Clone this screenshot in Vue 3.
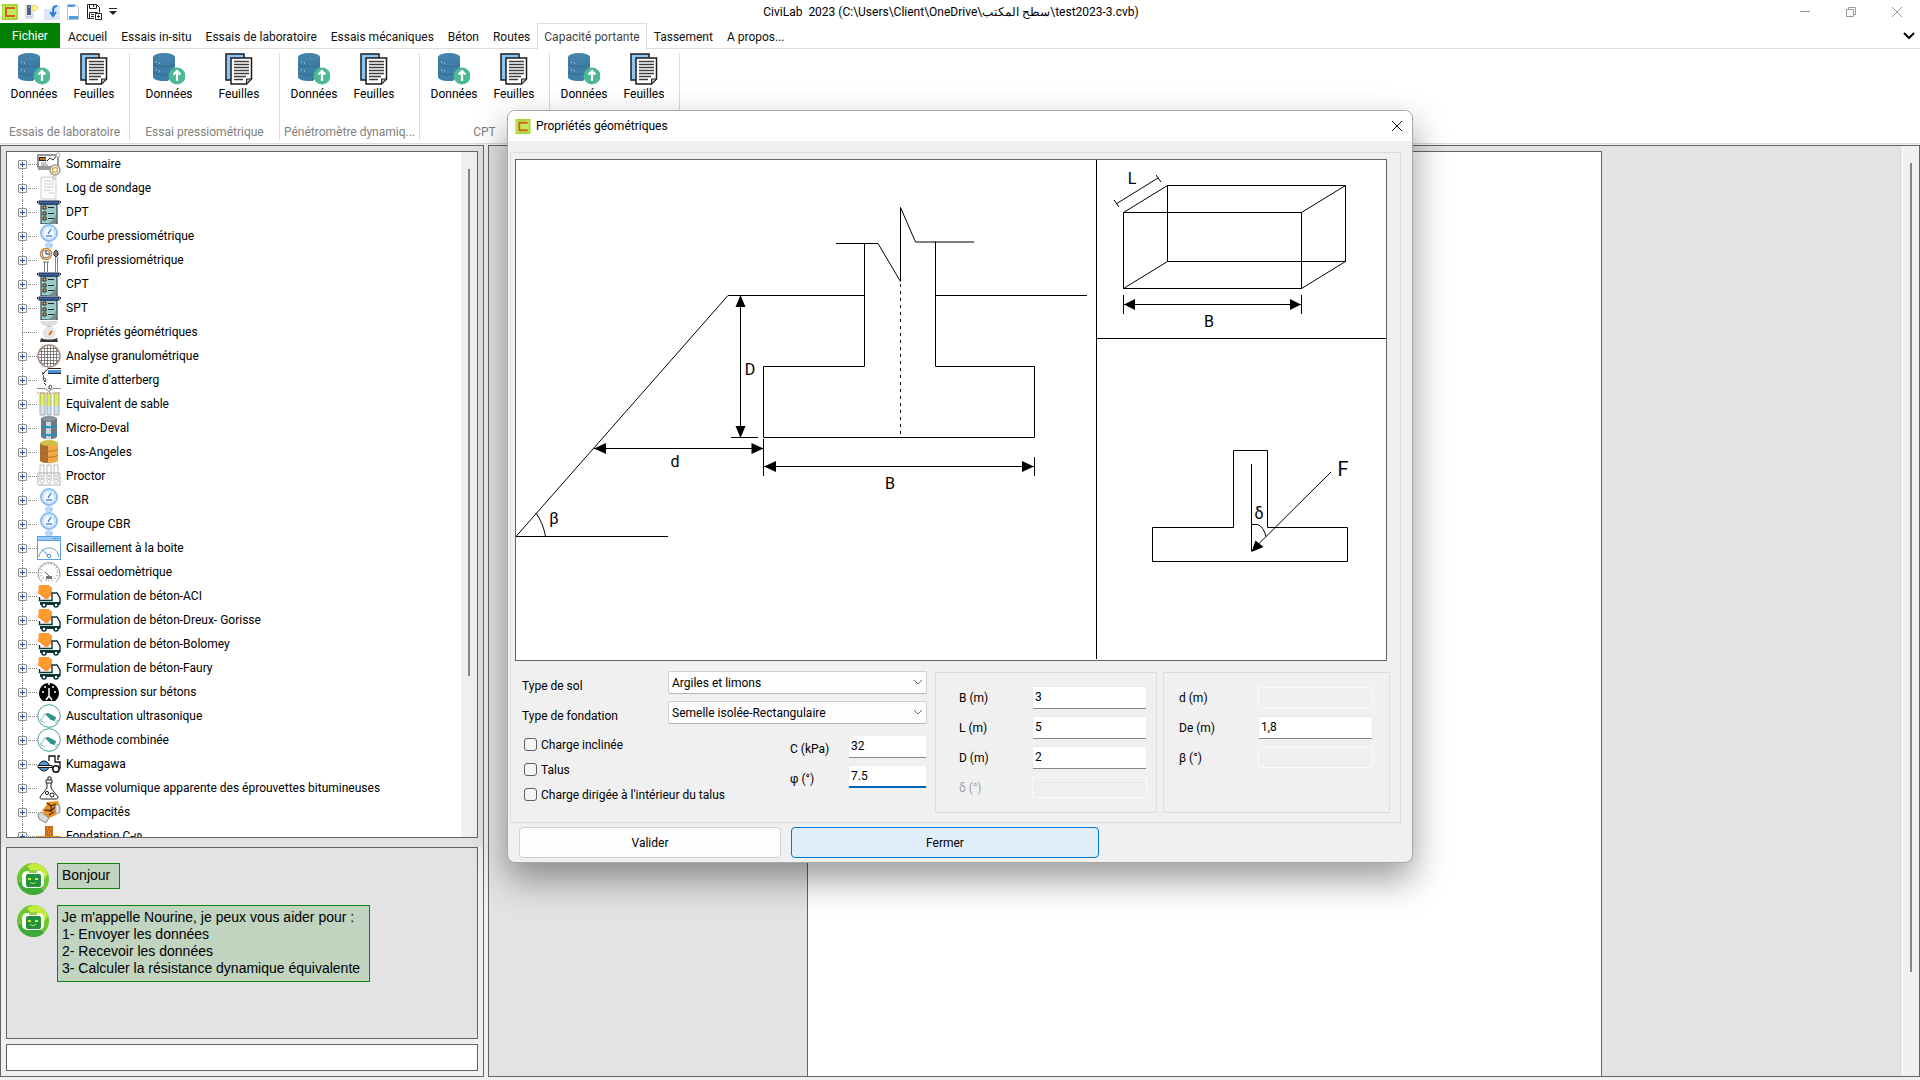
<template>
  <div class="app">
    <svg class="sprite" aria-hidden="true">
      <defs>
        <symbol id="logo" viewBox="0 0 16 16">
          <rect width="16" height="16" fill="#a4d832" />
          <rect x="1" y="2" width="13" height="12" fill="#c0ea5c" />
          <path d="M13 4H4v8h9" fill="none" stroke="#d2601a" stroke-width="2" />
        </symbol>
        <symbol id="database" viewBox="0 0 32 32">
          <path d="M0 4v20c0 2.500 5 4 11 4h4l7-9V4z" fill="#3f7ea6" />
          <path d="M0 11c2 3 18 4 22 0M0 19c2 3 15 4 19 1" fill="none" stroke="#346b91" stroke-width="1" />
          <ellipse cx="11" cy="4" rx="11" ry="4" fill="#4583aa" />
          <path d="M3 9h1M6 10h1M3 17h1M6 18h1" stroke="#cfe6f2" />
          <circle cx="24" cy="23" r="8.500" fill="#4db894" />
          <path d="M24 28v-9M20.500 21.500L24 18l3.500 3.500" fill="none" stroke="#fff" stroke-width="2.200" />
        </symbol>
        <symbol id="sheets" viewBox="0 0 28 32">
          <path d="M1 1h18v26H1z" fill="#8cc6f5" stroke="#1b1b1b" stroke-width="1.500" />
          <path d="M6 5h20.500v21l-5 5H6z" fill="#fff" stroke="#1b1b1b" stroke-width="1.500" />
          <path d="M9 8.500h15M9 11.500h15M9 14.500h15M9 17.500h15M9 20.500h15M9 23.500h12M9 26.500h9" stroke="#3c3c3c" stroke-width="1.500" />
          <path d="M26.500 26h-5v5z" fill="#bbb" stroke="#1b1b1b" />
        </symbol>
        <symbol id="summary" viewBox="0 0 24 24">
          <rect x="1" y="3" width="20" height="12" fill="#fff" stroke="#333" />
          <path d="M1 16h12v2H1z" fill="#999" />
          <rect x="2" y="5" width="7" height="4" fill="#3a1c08" />
          <path d="M3 7h6" stroke="#e58a2c" stroke-width="1.500" />
          <path d="M4 11h5M4 13h7" stroke="#888" />
          <path d="M10 9l3-3 3 2 5-6" fill="none" stroke="#222" />
          <circle cx="21" cy="3" r="2" fill="#fff" stroke="#aaa" />
          <circle cx="18" cy="18" r="5" fill="#fff" stroke="#999" stroke-width="1.500" />
          <circle cx="18" cy="18" r="2.500" fill="#fff" stroke="#e0a93a" stroke-width="1.500" />
        </symbol>
        <symbol id="log" viewBox="0 0 24 24">
          <path d="M4 1h15v22H4z" fill="#fcfcfc" stroke="#ccc" />
          <path d="M7 5h10M7 8h10M7 11h10M7 14h7M12 17h5" stroke="#ccc" />
          <path d="M16 0v3h3" stroke="#bbb" fill="none" />
        </symbol>
        <symbol id="penetro" viewBox="0 0 24 24">
          <rect x="4" y="4" width="16" height="20" fill="#97cdcb" stroke="#222" />
          <path d="M19 14v10H9c6-2 9-5 10-10z" fill="#7d8a8c" />
          <rect x="2" y="1" width="20" height="3" fill="#3c63a5" stroke="#1d2c4b" />
          <path d="M0 1v2M24 1v2" stroke="#222" stroke-width="2" />
          <path d="M6 6h3v3H6zM6 12h3v3H6zM6 17h3v3H6z" fill="#f0a94f" stroke="#222" />
          <path d="M11 7.500h6M11 13.500h6M11 18.500h6" stroke="#222" />
        </symbol>
        <symbol id="gauge" viewBox="0 0 24 24">
          <circle cx="12" cy="9" r="8" fill="#e4f1ff" stroke="#8bbcf3" stroke-width="2" />
          <circle cx="12" cy="9" r="5.500" fill="#fff" stroke="#a3cbf6" stroke-dasharray="2 1" />
          <path d="M14 5l-3 5M9 12h6" stroke="#4a93e6" stroke-width="1.500" fill="none" />
          <path d="M10 18h4M9 20h6v3H9z" stroke="#8bbcf3" fill="#cfe4fb" />
        </symbol>
        <symbol id="profile" viewBox="0 0 24 24">
          <circle cx="9" cy="6" r="5.500" fill="#fff" stroke="#d08b2e" stroke-width="1.500" />
          <circle cx="9" cy="6" r="3.800" fill="none" stroke="#222" stroke-width=".6" />
          <path d="M9 3v3h3" stroke="#222" fill="none" />
          <path d="M6 14h6M7.500 14v10M10.500 14v10" stroke="#777" fill="none" />
          <path d="M17 4l2-2 2 2v3l-2 2-2-2z" fill="#888" stroke="#222" />
          <path d="M18.500 9v15M20.500 9v15" stroke="#888" />
        </symbol>
        <symbol id="scale" viewBox="0 0 24 24">
          <path d="M3 1h18c-1 4-4 5-9 5S4 5 3 1z" fill="#ddd" />
          <path d="M10 6h4v3h-4z" fill="#aaa" />
          <circle cx="12" cy="13" r="6.500" fill="#e6e6e6" />
          <path d="M12 15l3-4" stroke="#e26a1f" stroke-width="2" />
          <path d="M4 18c4 2 12 2 16 0l1 4H3z" fill="#34383e" />
        </symbol>
        <symbol id="sieve" viewBox="0 0 24 24">
          <circle cx="12" cy="12" r="11" fill="#fff" stroke="#a48b80" stroke-width="1.500" />
          <path d="M4.500 5v14M7.500 3v18M10.500 2v20M13.500 2v20M16.500 3v18M19.500 5v14M5 4.500h14M3 7.500h18M2 10.500h20M2 13.500h20M3 16.500h18M5 19.500h14" stroke="#555" stroke-width=".7" />
        </symbol>
        <symbol id="atterberg" viewBox="0 0 24 24">
          <path d="M24 .5H11L6 6M24 5.500H11" stroke="#222" fill="none" />
          <path d="M11 2h13v3H11z" fill="#4a90d9" />
          <path d="M6 4c-2 3 2 3 0 6M6 11c2-2 4 0 2 3zM12 18c4-3 3 4 0 3zM7 15l2 2" stroke="#333" fill="none" />
          <path d="M0 20.500h8l4 3 4-3h8" stroke="#888" fill="none" />
        </symbol>
        <symbol id="tubes" viewBox="0 0 24 24">
          <path d="M3 2h5v12H3zM10 2h4v12h-4zM17 2h5v12h-5z" fill="#dff04a" />
          <path d="M3 14h5v9H3zM10 14h4v9h-4zM17 14h5v9h-5z" fill="#c8e6fb" />
          <path d="M3 1h5v22H3zM10 1h4v22h-4zM17 1h5v22h-5z" fill="none" stroke="#a6a6a6" />
          <path d="M0 1h24" stroke="#c79a5c" stroke-dasharray="2 1" />
        </symbol>
        <symbol id="barrel" viewBox="0 0 24 24">
          <path d="M4 3v18c3 3 13 3 16 0V3z" fill="#6d7a80" />
          <path d="M9 4h5v19H9z" fill="#cfd5d8" />
          <ellipse cx="12" cy="3" rx="8" ry="2.500" fill="#8b969b" stroke="#5d676c" stroke-width=".6" />
          <path d="M4 8c4 3 12 3 16 0v2c-4 3-12 3-16 0zM4 16c4 3 12 3 16 0v2c-4 3-12 3-16 0z" fill="#248fb8" />
        </symbol>
        <symbol id="drum" viewBox="0 0 24 24">
          <path d="M3 3v18c4 3 14 3 18 0V3z" fill="#f0a945" />
          <path d="M3 3v18c2 1 5 2 8 2V4z" fill="#a96c2c" />
          <ellipse cx="12" cy="3" rx="9" ry="3" fill="#cfc14a" />
          <path d="M3 9c4 3 14 3 18 0M3 15c4 3 14 3 18 0" stroke="#b5762a" fill="none" />
        </symbol>
        <symbol id="proctor" viewBox="0 0 24 24">
          <path d="M3 1h4v16c0 3-4 3-4 0zM10 1h4v16c0 3-4 3-4 0zM17 1h4v16c0 3-4 3-4 0z" fill="#fff" stroke="#bbb" />
          <path d="M1 9h22v12H1z" fill="none" stroke="#b9a9bf" />
          <path d="M4 12h2M11 12h2M18 12h2M4 15h2M11 15h2M18 15h2" stroke="#999" />
        </symbol>
        <symbol id="shear" viewBox="0 0 24 24">
          <rect x=".5" y=".5" width="23" height="23" fill="#fff" stroke="#5a9fe8" />
          <path d="M1 1h22v3H1z" fill="#9cc9f8" />
          <path d="M1 4.500h22" stroke="#5a9fe8" />
          <path d="M16 2.500h1M18 2.500h1M20 2.500h1" stroke="#2b6fbd" />
          <path d="M2 21c1-12 19-12 20 0" fill="none" stroke="#5fa3a8" />
          <path d="M5 14l7 6" stroke="#3d8ae0" />
          <circle cx="12" cy="20" r="1.800" fill="#fff" stroke="#3d8ae0" />
        </symbol>
        <symbol id="oedo" viewBox="0 0 24 24">
          <path d="M5 22a11 11 0 1 1 14 0" fill="#fff" stroke="#999" />
          <circle cx="12" cy="12" r="8.500" fill="none" stroke="#aaa" stroke-width="2" stroke-dasharray="1 2.200" />
          <path d="M9 16h6v3H9z" fill="#777" />
          <path d="M12 16L8 12" stroke="#555" />
        </symbol>
        <symbol id="mixer" viewBox="0 0 24 24">
          <path d="M2 1h10l3 3v6l-4 5H8L1 9z" fill="#ff9a33" />
          <path d="M2.500 13v3.500H15V9h5l3 5v6" fill="none" stroke="#0b3538" stroke-width="1.400" />
          <path d="M3 18h20v3H3z" fill="#0b3538" />
          <circle cx="7" cy="21" r="2" fill="#fff" stroke="#0b3538" stroke-width="1.600" />
          <circle cx="19" cy="21" r="2" fill="#fff" stroke="#0b3538" stroke-width="1.600" />
        </symbol>
        <symbol id="dial" viewBox="0 0 24 24">
          <path d="M6 21a10 10 0 1 1 12 0z" fill="#000" />
          <path d="M12 8v9M12 16l-3 4M12 16l3 4" stroke="#fff" stroke-width="1.500" />
          <path d="M5 12h2M17 12h2M7 7h2M15 7h2M11 4h2" stroke="#fff" stroke-width="1.500" />
        </symbol>
        <symbol id="ultrasound" viewBox="0 0 24 24">
          <circle cx="12" cy="12" r="11.300" fill="#fff" stroke="#3f9f99" />
          <path d="M8 10l3-1 8 4-1 4-4-1z" fill="#2f8f8c" />
          <path d="M8 10c-2 0-1 5-5 6l5 3" fill="none" stroke="#8ab5b3" />
          <path d="M19 17l3-1M18 19l2-1" stroke="#8ab5b3" />
        </symbol>
        <symbol id="roller" viewBox="0 0 24 24">
          <circle cx="7" cy="14" r="5" fill="#4a9be0" stroke="#111" />
          <path d="M1 13.500h14v2H1z" fill="#fff" stroke="#111" />
          <path d="M12 9V4h6v6h5v6h-8M21 8V4h2" fill="none" stroke="#111" stroke-width="1.300" />
          <circle cx="19" cy="17" r="3.200" fill="#fff" stroke="#111" stroke-width="1.500" />
        </symbol>
        <symbol id="flask" viewBox="0 0 24 24">
          <path d="M9 4h6v3H9zM10 7v5L3 21c0 2 1 2 2 2h14c1 0 2 0 2-2l-7-9V7" fill="#fff" stroke="#222" />
          <path d="M11 4V1h3v3" fill="none" stroke="#222" />
          <circle cx="10" cy="17" r="1.600" fill="none" stroke="#222" />
          <circle cx="15" cy="19" r="2" fill="none" stroke="#222" />
        </symbol>
        <symbol id="compactor" viewBox="0 0 24 24">
          <path d="M5 10l4-4 1-4 11-1 2 5-4 9-9 4z" fill="#ea9122" />
          <path d="M10 3l4 3 5-2M8 10l6 1 6-6M14 6v6M12 15l5-3" stroke="#4a2a0a" fill="none" stroke-width="1.300" />
          <path d="M1 14l3-2 8 6-3 5-7-4z" fill="#d8d8d8" stroke="#888" />
          <ellipse cx="20.500" cy="9" rx="2.500" ry="4.500" fill="#ddd" stroke="#888" />
        </symbol>
        <symbol id="footing" viewBox="0 0 24 24">
          <path d="M8 2h8v10h8v8H0v-8h8z" fill="#ee8a22" />
          <path d="M8 2h8v10H8z" fill="#c96c12" />
          <path d="M10 4h1M13 5h1M11 8h1M13 10h1" stroke="#f7c07a" />
        </symbol>
        <symbol id="robot" viewBox="0 0 32 32">
          <circle cx="16" cy="16" r="16" fill="#6cc531" />
          <path d="M16 0a16 16 0 0 1 15 11L24 21 10 3z" fill="#c3ec3c" />
          <path d="M1 20a16 16 0 0 0 15 12 16 16 0 0 0 11-4L14 16z" fill="#3dab38" />
          <rect x="5" y="8" width="22" height="17" rx="5" fill="#fcfff0" />
          <rect x="12" y="7" width="8" height="3" rx="1" fill="#93cf45" />
          <rect x="9" y="11" width="15" height="13" rx="2" fill="#239040" />
          <path d="M11 15h3v2h-3zM18 15h3v2h-3z" fill="#c1ef4a" />
          <path d="M13 19c1 2 5 2 6 0" stroke="#c1ef4a" fill="none" />
        </symbol>
      </defs>
    </svg>

    <header class="titlebar">
      <div class="quick">
        <svg width="16" height="16"><use href="#logo" /></svg>
        <button aria-label="Nouveau">
          <svg width="16" height="16" viewBox="0 0 16 16">
            <path d="M2 1h9v14H2z" fill="#dfe5ee" />
            <path d="M4 1h4v10H4z" fill="#51617b" />
            <path d="M5 3h2M3 13h6" stroke="#a9c6ea" />
            <circle cx="12" cy="4" r="2.500" fill="#fff9a8" stroke="#e8df38" />
          </svg>
        </button>
        <button aria-label="Ouvrir">
          <svg width="16" height="16" viewBox="0 0 16 16">
            <path d="M0 5h6l2-4h8v15H0z" fill="#dae6fa" />
            <path d="M13 2c-4 0-4 3-4 9M6 8l3 4 3-4" fill="none" stroke="#2a7bd8" stroke-width="2" />
          </svg>
        </button>
        <button aria-label="Modèle">
          <svg width="16" height="16" viewBox="0 0 16 16">
            <path d="M2.500.5h8l3 3v12h-11z" fill="#fff" stroke="#b5bcc8" />
            <path d="M3 1h7v2H3zM4 12h9v3H4z" fill="#4aa0e6" />
          </svg>
        </button>
        <button aria-label="Enregistrer">
          <svg width="16" height="16" viewBox="0 0 16 16" fill="none" stroke="#222">
            <path d="M8 14.500H1.500V.5h9l3 3v5M3.500.5v4h7v-4M7.500 1v2M3.500 14V8.500h8M5 10.500h3M5 12.500h3" />
            <path d="M9.500 9.500h6v6h-6zM12.500 11v3M11 12.500h3" />
          </svg>
        </button>
        <button class="more" aria-label="Personnaliser">
          <svg width="8" height="8" viewBox="0 0 8 8"><path d="M0 .5h8" stroke="#222" /><path d="M0 3h8L4 7z" fill="#222" /></svg>
        </button>
      </div>
      <h1 class="title">CiviLab&nbsp; 2023 (C:\Users\Client\OneDrive\<bdi>سطح المكتب</bdi>\test2023-3.cvb)</h1>
      <div class="window-buttons">
        <button aria-label="Réduire"><svg width="10" height="10"><path d="M0 4.500h10" stroke="#999" /></svg></button>
        <button aria-label="Restaurer">
          <svg width="10" height="10" fill="none" stroke="#999"><path d="M.5 2.500h7v7h-7zM2.500 2.500v-2h7v7h-2" /></svg>
        </button>
        <button aria-label="Quitter"><svg width="10" height="10"><path d="M0 0l10 10M10 0L0 10" stroke="#999" /></svg></button>
      </div>
    </header>

    <nav class="tabs">
      <a v-for="tab in tabs" :key="tab" href="#" class="tab" :class="{ file: tab === 'Fichier', active: tab === activeTab }">{{ tab }}</a>
      <button class="collapse" aria-label="Réduire le ruban">
        <svg width="12" height="8" viewBox="0 0 12 8"><path d="M1 1l5 5 5-5" fill="none" stroke="#000" stroke-width="2" /></svg>
      </button>
    </nav>

    <section class="ribbon">
      <div v-for="(group, i) in groups" :key="i" class="ribbon-group" :class="group.size">
        <div class="ribbon-buttons">
          <button><svg width="32" height="32"><use href="#database" /></svg>Données</button>
          <button><svg width="28" height="32"><use href="#sheets" /></svg>Feuilles</button>
        </div>
        <div class="ribbon-label">{{ group.label }}</div>
      </div>
    </section>

    <main class="workspace">
      <aside class="side">
        <div class="tree-zone">
          <div class="tree">
            <ul>
              <li v-for="item in tree" :key="item.label">
                <span class="branch"><button v-if="!item.leaf" class="expand" aria-label="Développer"></button></span>
                <svg width="24" height="24"><use :href="'#' + item.icon" /></svg>
                <span class="node">{{ item.label }}</span>
              </li>
            </ul>
            <div class="scrollbar"><div class="thumb tree-thumb"></div></div>
          </div>
        </div>
        <div class="chat">
          <div v-for="(message, i) in messages" :key="i" class="message">
            <svg width="32" height="32"><use href="#robot" /></svg>
            <p>{{ message }}</p>
          </div>
        </div>
        <input v-model="question" class="chat-input" aria-label="Message" />
      </aside>

      <section class="document">
        <div class="sheet"></div>
        <div class="scrollbar page-scroll"><div class="thumb page-thumb"></div></div>
      </section>
    </main>

    <div class="overlay">
      <div class="dialog" role="dialog" aria-labelledby="dialog-title">
        <div class="dialog-bar">
          <svg width="16" height="15" preserveAspectRatio="none"><use href="#logo" /></svg>
          <h2 id="dialog-title">Propriétés géométriques</h2>
          <button aria-label="Fermer la fenêtre"><svg width="10" height="10"><path d="M0 0l10 10M10 0L0 10" stroke="#111" /></svg></button>
        </div>

        <div class="frame">
          <svg class="sketch" viewBox="0 0 870 500">
            <g class="line">
              <path d="M580.500 0v499M580.500 178.500H870" />
              <!-- slope and footing -->
              <path d="M152 376.500H0L212 135.500h136.500M419.500 135.500H571" />
              <path d="M320 83.500h42l22.500 38v-74l15 34.500H458" />
              <path d="M348.500 83.500v123h-101v71h271v-71h-99v-125" />
              <path d="M384.500 124v153" stroke-dasharray="3 4" />
              <path d="M224.500 135v142M215 277.500h27" />
              <path d="M78 288.500h169.500M247.500 279v37M518.500 297v19M247.500 306.500h271" />
              <path d="M20 353q7 10 9.500 23" />
              <!-- box in perspective -->
              <path d="M607.500 52.500h178v76h-178zM651.500 25.500h178v76h-178z" />
              <path d="M607.500 52.500l44-27M785.500 52.500l44-27M607.500 128.500l44-27M785.500 128.500l44-27" />
              <path d="M600 44l42-26M598 40l5 7M640 15l5 7" />
              <path d="M607.500 135v19M785.500 135v19M607.500 144.500h178" />
              <!-- inclined load -->
              <path d="M717.500 290.500h34v77h80v34h-195v-34h81z" />
              <path d="M735.500 304v87l79.500-79M735.500 364.500h6q6 2 8.500 12" />
            </g>
            <path d="M224.500 135l5 12h-10zM224.500 278l5-12h-10zM78 288.500l12-5.500v11zM247.500 288.500l-12-5.500v11zM248 306.500l12-5.500v11zM518 306.500l-12-5.500v11zM608 144.500l11-5.500v11zM785 144.500l-11-5.500v11zM735.500 392l4-11.500 8 6.500z" />
            <g class="letters">
              <text x="234" y="215">D</text>
              <text x="159" y="307">d</text>
              <text x="374" y="329">B</text>
              <text x="38" y="364">β</text>
              <text x="616" y="24">L</text>
              <text x="693" y="167">B</text>
              <text x="743" y="359">δ</text>
              <text x="827" y="316" class="force">F</text>
            </g>
          </svg>

          <div class="form">
            <div class="soil">
              <div class="choices">
                <label for="sol">Type de sol</label>
                <div class="select">
                  <select id="sol" v-model="sol"><option>Argiles et limons</option></select>
                  <svg width="10" height="6"><path d="M1 0l4 4 4-4" /></svg>
                </div>
                <label for="fondation">Type de fondation</label>
                <div class="select">
                  <select id="fondation" v-model="fondation"><option>Semelle isolée-Rectangulaire</option></select>
                  <svg width="10" height="6"><path d="M1 0l4 4 4-4" /></svg>
                </div>
              </div>
              <div class="details">
                <div class="checks">
                  <label v-for="check in checks" :key="check.label"><input v-model="check.value" type="checkbox" />{{ check.label }}</label>
                </div>
                <div class="params">
                  <label for="cohesion">C (kPa)</label>
                  <input id="cohesion" v-model="cohesion" />
                  <label for="phi">φ (°)</label>
                  <input id="phi" v-model="phi" class="focused" />
                </div>
              </div>
            </div>

            <div v-for="(box, i) in dimensions" :key="i" class="dims" :class="'dims-' + i">
              <div v-for="field in box" :key="field.id" class="field">
                <label :for="field.id" :class="{ off: field.id === 'delta' }">{{ field.label }}</label>
                <input :id="field.id" v-model="field.value" :disabled="field.disabled" />
              </div>
            </div>
          </div>
        </div>

        <div class="actions">
          <button class="validate">Valider</button>
          <button class="close">Fermer</button>
        </div>
      </div>
    </div>
  </div>
</template>

<script setup>
import { ref } from 'vue'

const activeTab = ref('Capacité portante')
const tabs = [
  'Fichier', 'Accueil', 'Essais in-situ', 'Essais de laboratoire', 'Essais mécaniques',
  'Béton', 'Routes', 'Capacité portante', 'Tassement', 'A propos...',
]

const groups = [
  { label: 'Essais de laboratoire', size: '' },
  { label: 'Essai pressiométrique', size: 'wide' },
  { label: 'Pénétromètre dynamiq...', size: 'medium' },
  { label: 'CPT', size: '' },
  { label: '', size: '' },
]

const tree = [
  { label: 'Sommaire', icon: 'summary' },
  { label: 'Log de sondage', icon: 'log' },
  { label: 'DPT', icon: 'penetro' },
  { label: 'Courbe pressiométrique', icon: 'gauge' },
  { label: 'Profil pressiométrique', icon: 'profile' },
  { label: 'CPT', icon: 'penetro' },
  { label: 'SPT', icon: 'penetro' },
  { label: 'Propriétés géométriques', icon: 'scale', leaf: true },
  { label: 'Analyse granulométrique', icon: 'sieve' },
  { label: "Limite d'atterberg", icon: 'atterberg' },
  { label: 'Equivalent de sable', icon: 'tubes' },
  { label: 'Micro-Deval', icon: 'barrel' },
  { label: 'Los-Angeles', icon: 'drum' },
  { label: 'Proctor', icon: 'proctor' },
  { label: 'CBR', icon: 'gauge' },
  { label: 'Groupe CBR', icon: 'gauge' },
  { label: 'Cisaillement à la boite', icon: 'shear' },
  { label: 'Essai oedomètrique', icon: 'oedo' },
  { label: 'Formulation de béton-ACI', icon: 'mixer' },
  { label: 'Formulation de béton-Dreux- Gorisse', icon: 'mixer' },
  { label: 'Formulation de béton-Bolomey', icon: 'mixer' },
  { label: 'Formulation de béton-Faury', icon: 'mixer' },
  { label: 'Compression sur bétons', icon: 'dial' },
  { label: 'Auscultation ultrasonique', icon: 'ultrasound' },
  { label: 'Méthode combinée', icon: 'ultrasound' },
  { label: 'Kumagawa', icon: 'roller' },
  { label: 'Masse volumique apparente des éprouvettes bitumineuses', icon: 'flask' },
  { label: 'Compacités', icon: 'compactor' },
  { label: 'Fondation C-φ', icon: 'footing' },
]

const messages = [
  'Bonjour',
  "Je m'appelle Nourine, je peux vous aider pour :\n1- Envoyer les données\n2- Recevoir les données\n3- Calculer la résistance dynamique équivalente",
]
const question = ref('')

const sol = ref('Argiles et limons')
const fondation = ref('Semelle isolée-Rectangulaire')
const cohesion = ref('32')
const phi = ref('7.5')

const checks = ref([
  { label: 'Charge inclinée', value: false },
  { label: 'Talus', value: false },
  { label: "Charge dirigée à l'intérieur du talus", value: false },
])

const dimensions = ref([
  [
    { id: 'b', label: 'B (m)', value: '3' },
    { id: 'l', label: 'L (m)', value: '5' },
    { id: 'depth', label: 'D (m)', value: '2' },
    { id: 'delta', label: 'δ (°)', value: '', disabled: true },
  ],
  [
    { id: 'distance', label: 'd (m)', value: '', disabled: true },
    { id: 'de', label: 'De (m)', value: '1,8' },
    { id: 'beta', label: 'β (°)', value: '', disabled: true },
  ],
])
</script>

<style>
body {
  margin: 0;
  overflow: hidden;
}
</style>

<style scoped>
.app {
  position: relative;
  display: flex;
  flex-direction: column;
  height: 100vh;
  background: #f0f0f0;
  color: #000;
  font-family: Roboto, "Noto Sans", sans-serif;
  font-size: 12px;
  line-height: 16px;
}

.app * {
  box-sizing: border-box;
}

button,
input,
select {
  font: inherit;
  color: inherit;
}

button {
  padding: 0;
  border: 0;
  background: none;
}

svg {
  display: block;
  flex: none;
}

h1,
h2,
p,
ul {
  margin: 0;
  padding: 0;
  font-size: 12px;
  font-weight: 400;
}

.sprite {
  position: absolute;
  width: 0;
  height: 0;
}

/* title bar */
.titlebar {
  display: grid;
  grid-template-columns: 138px 1fr 156px;
  align-items: center;
  height: 23px;
  background: #fff;
}

.quick {
  display: flex;
  align-items: center;
  gap: 5px;
  padding-left: 2px;
}

.more {
  margin-left: 2px;
}

.title {
  text-align: center;
}

.window-buttons {
  display: flex;
  justify-content: flex-end;
}

.window-buttons button {
  display: grid;
  place-items: center;
  width: 46px;
  height: 23px;
}

/* tabs */
.tabs {
  display: flex;
  height: 26px;
  background: #fff;
  border-bottom: 1px solid #dcdcdc;
}

.tab {
  height: 26px;
  padding: 0 6px;
  border: 1px solid transparent;
  border-bottom: 0;
  color: #111;
  line-height: 26px;
  text-decoration: none;
  white-space: nowrap;
}

.tab.file {
  width: 60px;
  margin-right: 1px;
  padding: 0;
  border: 0;
  height: 25px;
  background: #008000;
  color: #fff;
  text-align: center;
}

.tab.active {
  border-color: #dcdcdc;
  background: #fff;
  color: #444;
}

.collapse {
  margin: 0 5px 0 auto;
}

/* ribbon */
.ribbon {
  display: flex;
  height: 95px;
  padding: 4px 0 3px;
  background: #fff;
  border-bottom: 1px solid #dcdcdc;
}

.ribbon-group {
  display: flex;
  flex-direction: column;
  justify-content: space-between;
  width: 130px;
  padding: 0 4px;
  border-right: 1px solid #dcdcdc;
}

.ribbon-group.wide {
  width: 150px;
}

.ribbon-group.medium {
  width: 140px;
}

.ribbon-buttons {
  display: flex;
}

.ribbon-buttons button {
  display: flex;
  flex-direction: column;
  gap: 1px;
  align-items: center;
  width: 60px;
}

.wide .ribbon-buttons button {
  width: 70px;
}

.ribbon-label {
  color: #808080;
  text-align: center;
  white-space: nowrap;
}

/* workspace */
.workspace {
  display: flex;
  flex: 1;
  gap: 4px;
  min-height: 0;
  padding: 1px 0 3px;
}

.side {
  display: flex;
  flex-direction: column;
  width: 484px;
  border: 1px solid #646464;
}

.tree-zone {
  display: flex;
  flex: 1;
  min-height: 0;
  padding: 5px 5px 9px;
  background: #e3e3e3;
}

.tree {
  display: flex;
  flex: 1;
  overflow: hidden;
  border: 1px solid #646464;
  background: #fff;
}

.tree ul {
  flex: 1;
  list-style: none;
}

.tree li {
  display: flex;
  align-items: center;
  height: 24px;
  padding-left: 11px;
  white-space: nowrap;
}

.branch {
  position: relative;
  width: 19px;
  height: 24px;
}

.branch::before {
  content: "";
  position: absolute;
  top: 0;
  left: 4px;
  height: 24px;
  border-left: 1px dotted #808080;
}

li:first-child .branch::before {
  top: 12px;
  height: 12px;
}

.branch::after {
  content: "";
  position: absolute;
  top: 12px;
  left: 4px;
  width: 15px;
  border-top: 1px dotted #808080;
}

.expand {
  position: absolute;
  z-index: 1;
  top: 8px;
  left: 0;
  width: 9px;
  height: 9px;
  border: 1px solid #919191;
  border-radius: 1px;
  background:
    linear-gradient(#2b4a9b, #2b4a9b) center / 5px 1px no-repeat,
    linear-gradient(#2b4a9b, #2b4a9b) center / 1px 5px no-repeat,
    #f4f4f4;
}

.node {
  margin-left: 5px;
}

.scrollbar {
  width: 16px;
  background: #f0f0f0;
}

.thumb {
  width: 2px;
  margin: 17px 0 0 7px;
  background: #868686;
}

.tree-thumb {
  height: 74%;
}

.page-thumb {
  height: 87%;
}

.chat {
  height: 192px;
  margin: 0 5px;
  padding: 15px 10px;
  border: 1px solid #646464;
  background: #e3e3e3;
  font: 14px/17px "Liberation Sans", Arial, sans-serif;
}

.message {
  display: flex;
  gap: 8px;
  min-height: 42px;
}

.message p {
  align-self: flex-start;
  padding: 3px 9px 4px 4px;
  border: 1px solid #0a850a;
  background: #c0d4c0;
  font-size: 14px;
  white-space: pre-line;
}

.chat-input {
  height: 27px;
  margin: 5px;
  padding: 0 6px;
  border: 1px solid #646464;
  background: #fff;
}

.document {
  display: flex;
  flex: 1;
  border: 1px solid #646464;
  background: #e3e3e3;
}

.sheet {
  width: 795px;
  margin: 5px auto 0 318px;
  border: 1px solid #646464;
  border-bottom: 0;
  background: #fff;
}

.page-scroll {
  width: 17px;
  border-left: 1px solid #fff;
}

/* dialog */
.overlay {
  position: absolute;
  inset: 0;
  display: flex;
  align-items: flex-start;
  justify-content: center;
  padding-top: 110px;
}

.dialog {
  width: 906px;
  padding-bottom: 4px;
  overflow: hidden;
  border: 1px solid #a8a8a8;
  border-radius: 8px;
  background: #f0f0f0;
  box-shadow: 0 16px 36px rgba(0, 0, 0, 0.4);
}

.dialog-bar {
  display: flex;
  align-items: center;
  height: 30px;
  padding: 0 10px 0 7px;
  background: #fff;
}

.dialog-bar h2 {
  flex: 1;
  margin-left: 5px;
}

.frame {
  margin: 11px 11px 0 2px;
  padding: 6px 10px 9px 4px;
  border: 1px solid #dcdcdc;
}

.sketch {
  width: 872px;
  height: 502px;
  border: 1px solid #646464;
  background: #fff;
}

.line {
  fill: none;
  stroke: #000;
}

.letters {
  font-size: 16px;
  text-anchor: middle;
}

.letters .force {
  font-size: 20px;
}

.form {
  display: flex;
  margin-top: 10px;
}

.soil {
  flex: 1;
  margin-right: 8px;
}

.choices {
  display: grid;
  grid-template-columns: 146px 259px;
  row-gap: 7px;
  align-items: end;
  padding-left: 7px;
}

.choices label {
  line-height: 15px;
}

.select {
  position: relative;
}

.select select {
  display: block;
  width: 100%;
  height: 23px;
  padding: 0 24px 0 3px;
  appearance: none;
  border: 1px solid #cfcfcf;
  border-bottom-color: #b5b5b5;
  border-radius: 2px;
  background: #fdfdfd;
}

.select svg {
  position: absolute;
  top: 9px;
  right: 4px;
  fill: none;
  stroke: #666;
}

.details {
  display: flex;
  justify-content: space-between;
  margin-top: 8px;
  padding-left: 9px;
}

.checks label {
  display: flex;
  align-items: center;
  gap: 4px;
  height: 25px;
}

.checks input {
  width: 13px;
  height: 13px;
  margin: 0;
  appearance: none;
  border: 1px solid #5f5f5f;
  border-radius: 3px;
  background: #f5f5f5;
}

.params {
  display: grid;
  grid-template-columns: 58px 79px;
  grid-auto-rows: 23px;
  row-gap: 7px;
  align-items: center;
  margin-top: 3px;
}

.params label {
  padding-top: 5px;
}

.params input,
.field input {
  width: 100%;
  height: 23px;
  padding: 0 3px 2px 2px;
  border: 1px solid #ebebeb;
  border-bottom-color: #868686;
  border-radius: 2px;
  outline: 0;
  background: #fff;
}

.params .focused {
  padding-bottom: 1px;
  border-bottom: 2px solid #0067b8;
}

.dims {
  display: flex;
  flex-direction: column;
  gap: 7px;
  height: 141px;
  margin-top: 1px;
  padding-top: 13px;
  border: 1px solid #dcdcdc;
}

.dims-0 {
  width: 222px;
  margin-right: 6px;
  padding-left: 23px;
  padding-right: 9px;
}

.dims-1 {
  width: 227px;
  padding-left: 15px;
  padding-right: 16px;
}

.field {
  display: flex;
  align-items: center;
  justify-content: space-between;
  height: 23px;
}

.field input {
  width: 115px;
}

.field input:disabled {
  height: 21px;
  border-color: #fafafa;
  background: #efefef;
}

.off {
  color: #a0a0a0;
}

.actions {
  display: flex;
  gap: 10px;
  margin: 4px 0 0 11px;
}

.actions button {
  height: 31px;
  border: 1px solid #d0d0d0;
  border-radius: 4px;
  background: #fdfdfd;
}

.actions .validate {
  width: 262px;
}

.actions .close {
  width: 308px;
  border-color: #0078d4;
  background: #e0eef9;
}
</style>
